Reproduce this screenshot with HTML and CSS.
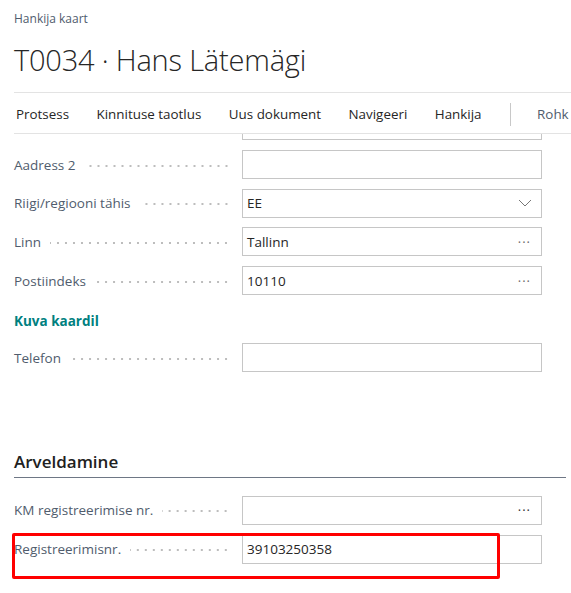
FILE: index.html
```html
<!DOCTYPE html>
<html lang="et">
<head>
  <meta charset="UTF-8" />
  <meta name="viewport" content="width=device-width, initial-scale=1" />
  <title>Hankija kaart</title>
  <link rel="stylesheet" href="styles.css">
</head>
<body>
  <div class="page">
    <div class="crumb">Hankija kaart</div>
    <h1 class="title">T0034 · Hans Lätemägi</h1>

    <nav class="actions">
      <a href="#">Protsess</a>
      <a href="#">Kinnituse taotlus</a>
      <a href="#">Uus dokument</a>
      <a href="#">Navigeeri</a>
      <a href="#">Hankija</a>
      <span class="sep"></span>
      <a href="#" class="more">Rohk</a>
    </nav>

    <div class="content">
      <div class="clip">
        <div class="box"></div>
      </div>

      <div class="row">
        <span class="label">Aadress 2</span>
        <div class="box"></div>
      </div>
      <div class="row">
        <span class="label">Riigi/regiooni tähis</span>
        <div class="box">EE
          <svg class="chev" width="14" height="8" viewBox="0 0 14 8"><path d="M1 1l6 6 6-6" fill="none" stroke="#777" stroke-width="1"/></svg>
        </div>
      </div>
      <div class="row">
        <span class="label">Linn</span>
        <div class="box">Tallinn<span class="dots">···</span></div>
      </div>
      <div class="row">
        <span class="label">Postiindeks</span>
        <div class="box">10110<span class="dots">···</span></div>
      </div>

      <a href="#" class="maplink">Kuva kaardil</a>

      <div class="row">
        <span class="label">Telefon</span>
        <div class="box"></div>
      </div>

      <h2 class="group">Arveldamine</h2>

      <div class="row">
        <span class="label">KM registreerimise nr.</span>
        <div class="box"><span class="dots dark">···</span></div>
      </div>
      <div class="row marked">
        <span class="label">Registreerimisnr.</span>
        <div class="box">39103250358</div>
      </div>
    </div>
  </div>
</body>
</html>
```

FILE: styles.css
```css
* {
  margin: 0;
  padding: 0;
  box-sizing: border-box;
}
body {
  font-family: "Open Sans", "Noto Sans", sans-serif;
  background: #fff;
  color: #212121;
}
.page {
  padding-left: 14px;
  height: 593px;
  overflow: hidden;
}
.crumb {
  font-size: 12px;
  color: #505c6d;
  padding-top: 10px;
  height: 29px;
}
.title {
  font-size: 29px;
  font-weight: 300;
  letter-spacing: -0.2px;
  color: #262626;
  height: 64px;
  line-height: 62px;
  border-bottom: 1px solid #e3e3e3;
  white-space: nowrap;
}
.actions {
  display: flex;
  align-items: center;
  height: 41px;
  padding-top: 2px;
  border-bottom: 1px solid #e3e3e3;
  white-space: nowrap;
  overflow: hidden;
}
.actions a {
  flex-shrink: 0;
  font-size: 13.4px;
  color: #262626;
  text-decoration: none;
  margin-left: 2px;
  margin-right: 25.5px;
}
.actions .sep {
  flex-shrink: 0;
  width: 1px;
  height: 23px;
  background: #c8c8c8;
  margin: 0 24px 0 3px;
}
.actions .more {
  color: #505c6d;
}
.content {
  width: 528px;
  display: flex;
  flex-direction: column;
}
.clip {
  height: 7px;
  overflow: hidden;
  display: flex;
  justify-content: flex-end;
  margin-bottom: 9px;
}
.clip .box {
  margin-top: -23px;
}
.row {
  display: flex;
  align-items: center;
  height: 29px;
  margin-bottom: 9.7px;
}
.label {
  flex: 1;
  display: flex;
  align-items: center;
  font-size: 13.5px;
  color: #505c6d;
  white-space: nowrap;
  margin-right: 12px;
}
.label::after {
  content: "";
  flex: 1;
  height: 4px;
  margin: 2px 0 0 9px;
  background-image: radial-gradient(circle, #bdbdbd 0.9px, transparent 1.1px);
  background-size: 8px 4px;
  background-repeat: repeat-x;
  background-position: right center;
}
.box {
  width: 300px;
  flex-shrink: 0;
  height: 29px;
  border: 1px solid #c6c6c6;
  display: flex;
  align-items: center;
  padding: 0 10px 0 4px;
  font-size: 13.5px;
  color: #262626;
}
.chev {
  margin-left: auto;
  margin-right: -1px;
}
.dots {
  margin-left: auto;
  color: #6e6e6e;
  font-size: 13px;
  letter-spacing: 1px;
}
.dots.dark {
  color: #333;
}
.maplink {
  align-self: flex-start;
  font-size: 13.5px;
  font-weight: 700;
  color: #00807f;
  text-decoration: none;
  height: 21px;
  line-height: 21px;
  margin: 6px 0 11.5px;
}
.group {
  width: 552px;
  font-size: 17px;
  font-weight: 600;
  color: #212121;
  margin-top: 68px;
  padding-bottom: 4px;
  border-bottom: 1px solid #6e7785;
  margin-bottom: 18px;
}
.marked {
  position: relative;
}
.marked::before {
  content: "";
  position: absolute;
  left: -2px;
  top: -2px;
  width: 482px;
  height: 40px;
  border: 3px solid #ff0000;
  border-radius: 2px;
}
```
